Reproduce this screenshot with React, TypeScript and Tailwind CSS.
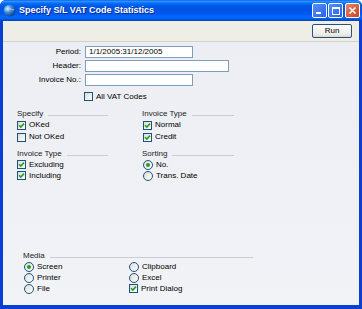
import React from "react";

const font = { fontFamily: '"Liberation Sans", Arial, sans-serif' };

function CheckBox({ checked }: { checked?: boolean }) {
  return (
    <span className="relative flex h-[9px] w-[9px] shrink-0 items-center justify-center border border-[#1c5180] bg-[linear-gradient(135deg,#dcdbd5,#ffffff)]">
      {checked && (
        <svg width="7" height="7" viewBox="0 0 7 7">
          <path d="M1 3.2 L2.8 5 L6 1.6" fill="none" stroke="#21a121" strokeWidth="1.6" />
        </svg>
      )}
    </span>
  );
}

function Radio({ checked }: { checked?: boolean }) {
  return (
    <span className="flex h-[10px] w-[10px] shrink-0 items-center justify-center rounded-full border border-[#1c5180] bg-[linear-gradient(135deg,#dcdbd5,#ffffff)]">
      {checked && <span className="h-[4px] w-[4px] rounded-full bg-[#21a121]" />}
    </span>
  );
}

function Option({
  label,
  checked,
  radio,
  h = "h-[12px]",
}: {
  label: string;
  checked?: boolean;
  radio?: boolean;
  h?: string;
}) {
  return (
    <div className={`flex items-center gap-[3px] ${h}`}>
      {radio ? <Radio checked={checked} /> : <CheckBox checked={checked} />}
      <span className="text-[8px] leading-none text-black">{label}</span>
    </div>
  );
}

function GroupHeader({ title }: { title: string }) {
  return (
    <div className="flex h-[11px] items-center gap-[5px]">
      <span className="text-[8px] leading-none text-[#222]">{title}</span>
      <div className="mt-[3px] h-px flex-1 bg-[#c8ccd4]" />
    </div>
  );
}

function Field({ label, value, wide }: { label: string; value?: string; wide?: boolean }) {
  return (
    <>
      <div className="flex h-[12px] items-center justify-end text-[8px] leading-none text-black">{label}</div>
      <div
        className={`flex h-[12px] items-center border border-[#7f9db9] bg-white pl-[3px] text-[8px] leading-none text-black ${
          wide ? "w-[144px]" : "w-[108px]"
        }`}
      >
        {value}
      </div>
    </>
  );
}

export default function App() {
  return (
    <div
      className="flex h-[309px] w-[362px] flex-col overflow-hidden rounded-t-[6px] bg-[#0a3fd6]"
      style={font}
    >
      {/* title bar */}
      <div className="flex h-[21px] shrink-0 items-center bg-[linear-gradient(to_bottom,#0058ee_0%,#3593ff_5%,#288eff_8%,#127dff_12%,#036ffc_16%,#0262ee_22%,#0057e5_30%,#0054e3_40%,#0055eb_60%,#005bf5_70%,#026afe_80%,#0062ef_88%,#0052d6_94%,#0040ab_100%)] pl-[3px] pr-[2px]">
        <svg width="13" height="13" viewBox="0 0 13 13" className="shrink-0">
          <defs>
            <radialGradient id="g" cx="0.35" cy="0.35" r="0.7">
              <stop offset="0" stopColor="#e8f4ff" />
              <stop offset="0.45" stopColor="#3e8fd8" />
              <stop offset="1" stopColor="#0b3d86" />
            </radialGradient>
          </defs>
          <circle cx="6.5" cy="6.5" r="6" fill="url(#g)" />
          <path d="M2 6 Q6.5 3.5 11 6" fill="none" stroke="#9fd0ff" strokeWidth="0.8" />
        </svg>
        <span className="ml-[3px] text-[9px] font-bold text-white [text-shadow:1px_1px_0_#0a2a8a]">
          Specify S/L VAT Code Statistics
        </span>
        <div className="ml-auto flex items-center">
          <div className="flex h-[15px] w-[15px] items-end rounded-[2px] border border-white bg-[linear-gradient(135deg,#5a8ff7,#2561e6)] pb-[3px] pl-[3px]">
            <div className="h-[2px] w-[5px] bg-white" />
          </div>
          <div className="ml-[1px] flex h-[15px] w-[15px] items-center justify-center rounded-[2px] border border-white bg-[linear-gradient(135deg,#5a8ff7,#2561e6)]">
            <div className="h-[8px] w-[8px] border border-t-2 border-white" />
          </div>
          <div className="ml-[2px] flex h-[15px] w-[15px] items-center justify-center rounded-[2px] border border-white bg-[linear-gradient(135deg,#e8866a,#c9431f)]">
            <svg width="9" height="9" viewBox="0 0 9 9">
              <path d="M1.5 1.5 L7.5 7.5 M7.5 1.5 L1.5 7.5" stroke="white" strokeWidth="1.6" />
            </svg>
          </div>
        </div>
      </div>

      {/* window body */}
      <div className="mx-[3px] mb-[4px] flex flex-1 flex-col">
        {/* toolbar */}
        <div className="flex h-[21px] shrink-0 items-center justify-end border-b border-[#d4d1c6] bg-[#eeede6] pr-[7px]">
          <button className="flex h-[14px] w-[40px] items-center justify-center rounded-[2px] border border-[#2b4f7e] bg-[linear-gradient(to_bottom,#ffffff,#ecebe6_80%,#d8d5cc)] text-[8px] leading-none text-black">
            Run
          </button>
        </div>

        {/* content */}
        <div className="flex flex-1 flex-col bg-[linear-gradient(to_bottom,#eceef3,#f2f3f7)] pb-[11px] pt-[4px]">
          <div className="grid grid-cols-[78px_auto] gap-x-[4px] gap-y-[2px]">
            <Field label="Period:" value="1/1/2005:31/12/2005" />
            <Field label="Header:" wide />
            <Field label="Invoice No.:" />
          </div>
          <div className="ml-[81px] mt-[5px]">
            <Option label="All VAT Codes" h="h-[11px]" />
          </div>

          <div className="mt-[6px] grid grid-cols-[91px_92px] gap-x-[34px] pl-[14px]">
            <div>
              <GroupHeader title="Specify" />
              <Option label="OKed" checked />
              <Option label="Not OKed" />
              <div className="mt-[5px]">
                <GroupHeader title="Invoice Type" />
                <Option label="Excluding" checked h="h-[11px]" />
                <Option label="Including" checked h="h-[11px]" />
              </div>
            </div>
            <div>
              <GroupHeader title="Invoice Type" />
              <div className="pl-[1px]">
                <Option label="Normal" checked />
                <Option label="Credit" checked />
              </div>
              <div className="mt-[5px]">
                <GroupHeader title="Sorting" />
                <div className="pl-[1px]">
                  <Option label="No." radio checked h="h-[11px]" />
                  <Option label="Trans. Date" radio h="h-[11px]" />
                </div>
              </div>
            </div>
          </div>

          <div className="mt-auto w-[250px] pl-[20px]">
            <GroupHeader title="Media" />
            <div className="grid grid-cols-[105px_auto] pl-[1px]">
              <Option label="Screen" radio checked h="h-[11px]" />
              <Option label="Clipboard" radio h="h-[11px]" />
              <Option label="Printer" radio h="h-[11px]" />
              <Option label="Excel" radio h="h-[11px]" />
              <Option label="File" radio h="h-[11px]" />
              <Option label="Print Dialog" checked h="h-[11px]" />
            </div>
          </div>
        </div>
      </div>
    </div>
  );
}
